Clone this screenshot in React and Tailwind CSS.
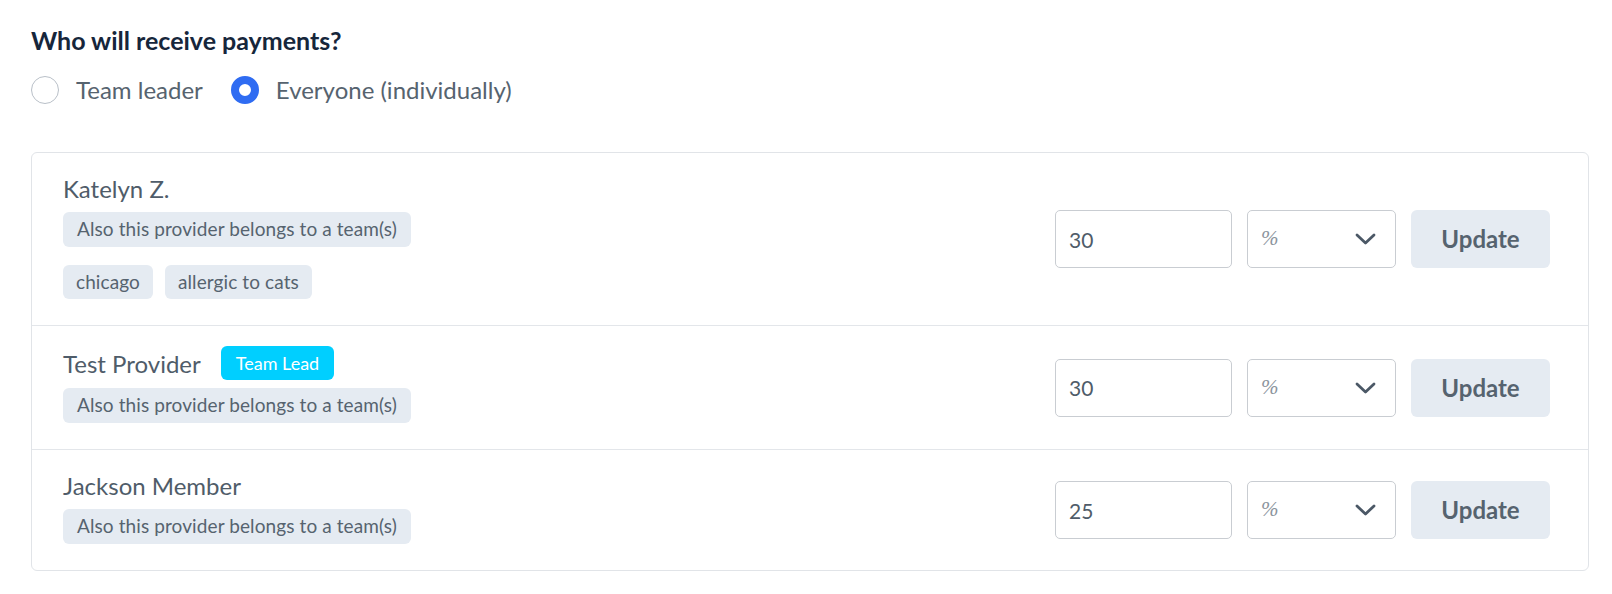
import { useState } from "react";

const rows = [
  { name: "Katelyn Z.", value: "30", tags: ["chicago", "allergic to cats"] },
  { name: "Test Provider", value: "30", lead: true },
  { name: "Jackson Member", value: "25" },
];

function Radio({ checked, label, onClick }) {
  return (
    <button onClick={onClick} className="flex items-center gap-[17px] cursor-pointer">
      {checked ? (
        <span className="w-[28px] h-[28px] rounded-full border-[8px] border-[#2f6cf2] bg-white" />
      ) : (
        <span className="w-[28px] h-[28px] rounded-full border border-[#b9c0c8] bg-white" />
      )}
      <span className="text-[24px] leading-[28px] text-[#56636f]">{label}</span>
    </button>
  );
}

function ProviderRow({ row, last }) {
  const [value, setValue] = useState(row.value);
  return (
    <div className={"flex items-center justify-between pl-[31px] pr-[38px] " + (last ? "" : "border-b border-[#e3e6ea]")}>
      <div className="flex flex-col pt-5 pb-[26px]">
        <div className="flex items-center min-h-[31px] gap-[20px]">
          <span className="text-[24px] leading-[31px] text-[#4f5c69]">{row.name}</span>
          {row.lead && (
            <span className="h-[34px] px-[15px] flex items-center rounded-[6px] bg-[#00cfff] text-white text-[18px]">Team Lead</span>
          )}
        </div>
        <div className="mt-2">
          <span className="inline-flex items-center h-[35px] px-[14px] rounded-[6px] bg-[#e5ebf2] text-[19px] tracking-[0.1px] text-[#56636f]">
            Also this provider belongs to a team(s)
          </span>
        </div>
        {row.tags && (
          <div className="flex gap-3 mt-[18px]">
            {row.tags.map((t) => (
              <span key={t} className="inline-flex items-center h-[34px] px-[13px] rounded-[6px] bg-[#e5ebf2] text-[19px] tracking-[0.1px] text-[#56636f]">
                {t}
              </span>
            ))}
          </div>
        )}
      </div>
      <div className="flex items-center gap-[15px]">
        <input
          value={value}
          onChange={(e) => setValue(e.target.value)}
          className="w-[177px] h-[58px] rounded-[5px] border border-[#c9cdd2] px-[13px] text-[21px] text-[#4f5c69] outline-none"
        />
        <div className="w-[149px] h-[58px] rounded-[5px] border border-[#c9cdd2] flex items-center justify-between pl-[13px] pr-[19px]">
          <span className="text-[21px] text-[#8b949d] italic font-['Liberation_Serif',serif]">%</span>
          <svg width="21" height="12" viewBox="0 0 21 12" fill="none">
            <path d="M2 2l8.5 8 8.5-8" stroke="#4b5866" strokeWidth="2.8" strokeLinecap="round" strokeLinejoin="round" />
          </svg>
        </div>
        <button className="w-[139px] h-[58px] rounded-[6px] bg-[#e5ebf2] text-[24px] font-bold text-[#56636f]">Update</button>
      </div>
    </div>
  );
}

export default function App() {
  const [who, setWho] = useState("everyone");
  return (
    <div className="bg-white min-h-[594px] px-[31px] pt-[26px] font-['Lato',sans-serif]">
      <h2 className="text-[25px] font-bold text-[#16263b] leading-[28px]">Who will receive payments?</h2>
      <div className="flex items-center gap-[28px] mt-[22px]">
        <Radio checked={who === "leader"} label="Team leader" onClick={() => setWho("leader")} />
        <Radio checked={who === "everyone"} label="Everyone (individually)" onClick={() => setWho("everyone")} />
      </div>
      <div className="mt-[48px] w-[1558px] border border-[#e1e4e8] rounded-[6px]">
        {rows.map((r, i) => (
          <ProviderRow key={r.name} row={r} last={i === rows.length - 1} />
        ))}
      </div>
    </div>
  );
}
